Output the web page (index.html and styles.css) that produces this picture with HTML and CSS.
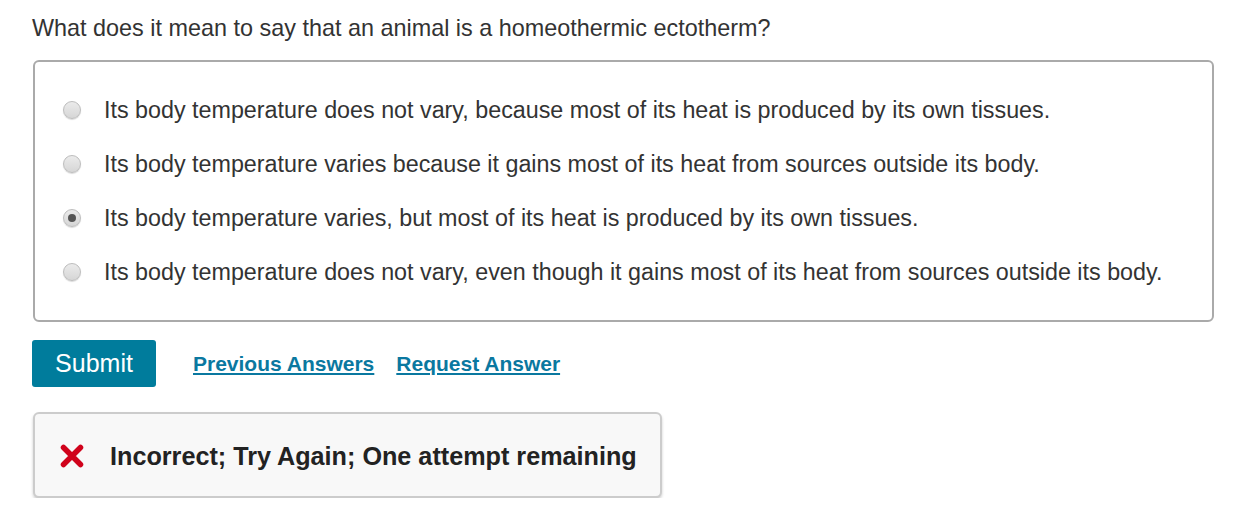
FILE: index.html
```html
<!DOCTYPE html>
<html lang="en">
<head>
    <meta charset="UTF-8">
    <title>Question</title>
    <link rel="stylesheet" href="styles.css">
</head>
<body>
    <div class="question">
        <p class="prompt">What does it mean to say that an animal is a homeothermic ectotherm?</p>

        <div class="choices">
            <label class="choice"><span class="radio"></span>Its body temperature does not vary, because most of its heat is produced by its own tissues.</label>
            <label class="choice"><span class="radio"></span>Its body temperature varies because it gains most of its heat from sources outside its body.</label>
            <label class="choice"><span class="radio checked"></span>Its body temperature varies, but most of its heat is produced by its own tissues.</label>
            <label class="choice"><span class="radio"></span>Its body temperature does not vary, even though it gains most of its heat from sources outside its body.</label>
        </div>

        <div class="actions">
            <button class="submit">Submit</button>
            <a href="#" class="link">Previous Answers</a>
            <a href="#" class="link">Request Answer</a>
        </div>

        <div class="feedback">
            <svg class="cross" width="24" height="24" viewBox="0 0 24 24">
                <path d="M3.5 3.5 L20.5 20.5 M20.5 3.5 L3.5 20.5" stroke="#d0021b" stroke-width="5.5" stroke-linecap="round"/>
            </svg>
            <span>Incorrect; Try Again; One attempt remaining</span>
        </div>
    </div>
</body>
</html>
```

FILE: styles.css
```css
body {
    margin: 0;
    font-family: "Liberation Sans", Arial, sans-serif;
    color: #333;
    background: #fff;
}
.question {
    padding: 13px 44px 0 32px;
}
.prompt {
    margin: 0 0 17px 0;
    font-size: 23.4px;
    line-height: 30px;
}
.choices {
    border: 2px solid #aaa;
    border-radius: 6px;
    margin-left: 1px;
    padding: 21px 28px 21px 27px;
}
.choice {
    display: flex;
    align-items: center;
    font-size: 23.3px;
    line-height: 28px;
    height: 54px;
}
.radio {
    width: 18px;
    height: 18px;
    border-radius: 50%;
    box-sizing: border-box;
    border: 1px solid #bdbdbd;
    background: linear-gradient(#ebebeb, #d6d6d6);
    box-shadow: 0 1px 1px rgba(0,0,0,0.15);
    margin-left: 1px;
    margin-right: 23px;
    position: relative;
    flex-shrink: 0;
}
.radio.checked::after {
    content: "";
    position: absolute;
    left: 4px;
    top: 4px;
    width: 8px;
    height: 8px;
    border-radius: 50%;
    background: #555;
}
.actions {
    display: flex;
    align-items: center;
    margin-top: 18px;
}
.submit {
    background: #007c9c;
    color: #fff;
    border: none;
    border-radius: 3px;
    font-family: "Liberation Sans", Arial, sans-serif;
    font-size: 25px;
    width: 124px;
    height: 47px;
    padding: 0;
    margin-right: 37px;
}
.link {
    color: #0a78a0;
    font-weight: bold;
    font-size: 21px;
    text-decoration: underline;
    margin-right: 22px;
}
.feedback {
    display: inline-flex;
    align-items: center;
    margin-top: 25px;
    margin-left: 1px;
    width: 629px;
    height: 86px;
    box-sizing: border-box;
    padding-left: 25px;
    padding-top: 3px;
    background: #f8f8f8;
    border: 2px solid #ccc;
    border-radius: 6px;
    box-shadow: 0 2px 3px rgba(0,0,0,0.2);
    font-weight: bold;
    font-size: 25.2px;
    color: #222;
}
.cross {
    margin-right: 26px;
    margin-top: -2px;
}
```
